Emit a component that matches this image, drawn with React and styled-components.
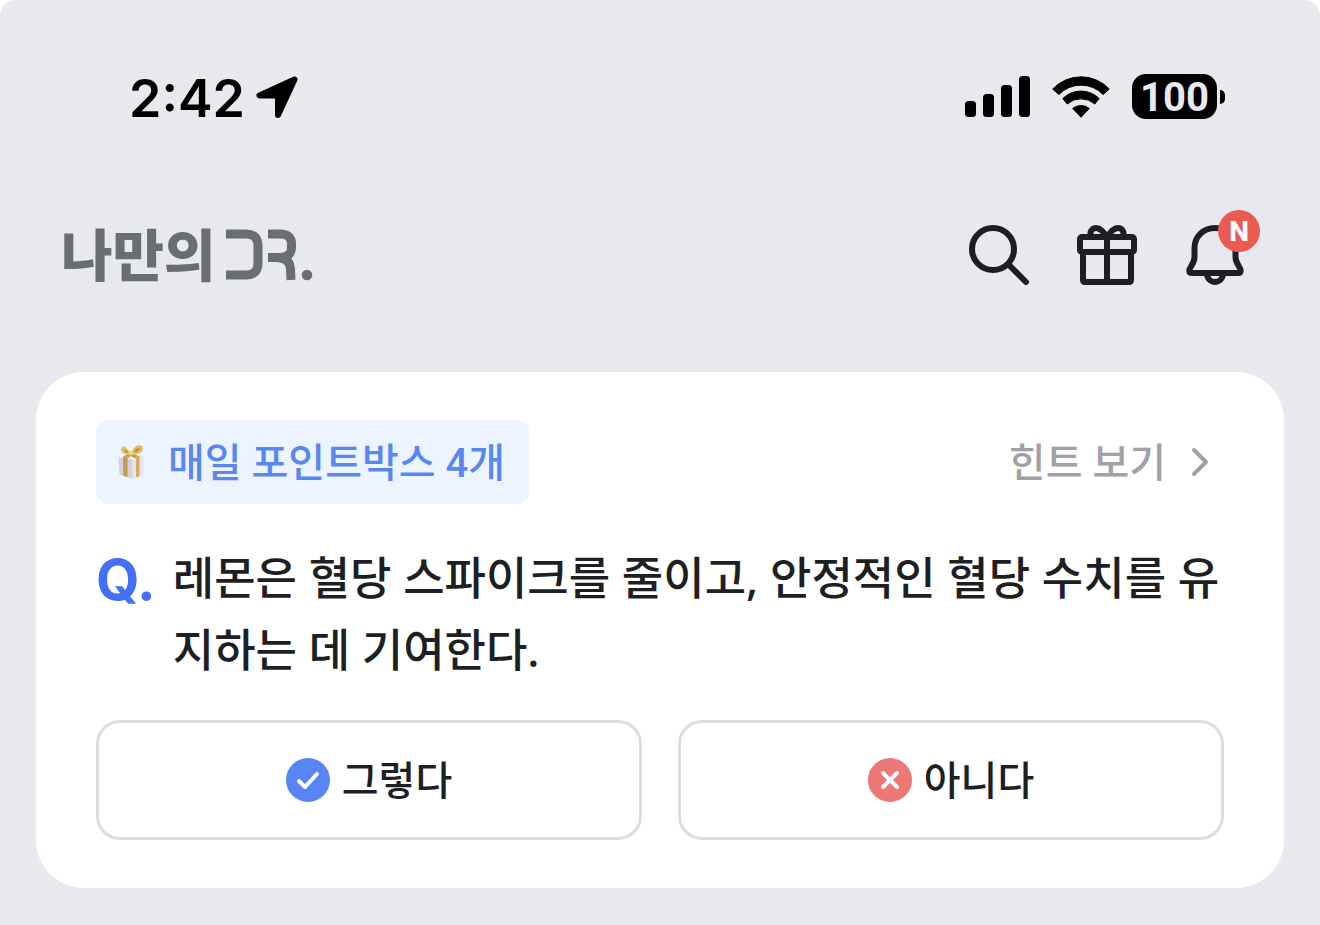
import { useState } from "react"
import styled, { createGlobalStyle } from "styled-components"

const GlobalStyle = createGlobalStyle`
  * {
    box-sizing: border-box;
  }
  body {
    margin: 0;
    background-color: white;
    font-family: Roboto, "Noto Sans CJK KR", sans-serif;
    color: #1e1f23;
  }
  button {
    font-family: inherit;
    color: inherit;
    padding: 0;
    border: none;
    background: none;
    cursor: pointer;
  }
  svg {
    display: block;
    flex-shrink: 0;
  }
`

const Page = styled.div`
  min-height: 100vh;
  background-color: #e8e9ee;
  border-radius: 16px 16px 0 0;
`

const StatusBar = styled.div`
  display: flex;
  justify-content: space-between;
  align-items: center;
  height: 128px;
  padding: 65px 95px 0 129px;
  color: black;
`

const StatusGroup = styled.div`
  display: flex;
  align-items: center;
  gap: ${({ $gap }) => $gap}px;
`

const Time = styled.time`
  padding-top: 4px;
  font-family: Inter, sans-serif;
  font-size: 52px;
  font-weight: 600;
  line-height: 60px;
`

const Battery = styled.div`
  display: flex;
  align-items: center;
  gap: 3px;
`

const BatteryBody = styled.div`
  width: 85px;
  height: 45px;
  border-radius: 14px;
  background-color: black;
  color: #e8e9ee;
  font-size: 40px;
  font-weight: 700;
  line-height: 47px;
  text-align: center;
`

const BatteryCap = styled.div`
  width: 5px;
  height: 14px;
  border-radius: 0 5px 5px 0;
  background-color: black;
`

const Header = styled.header`
  display: flex;
  justify-content: space-between;
  align-items: center;
  padding: 91px 69px 81px 61px;
`

const Logo = styled.a`
  display: flex;
  align-items: center;
  gap: 10px;
  color: #6b6d74;
  text-decoration: none;
`

const LogoText = styled.span`
  padding-bottom: 6px;
  font-family: "Noto Sans CJK KR", sans-serif;
  font-size: 56px;
  font-weight: 900;
  line-height: 66px;
`

const Actions = styled.nav`
  display: flex;
  gap: 36px;
`

const IconButton = styled.button`
  position: relative;
  width: 72px;
  height: 72px;
`

const Badge = styled.span`
  position: absolute;
  top: -9px;
  right: -9px;
  width: 42px;
  height: 42px;
  border-radius: 50%;
  background-color: #ec5b53;
  color: white;
  font-size: 28px;
  font-weight: 800;
  line-height: 44px;
  text-align: center;
`

const Card = styled.main`
  margin: 0 36px;
  padding: 48px 60px;
  border-radius: 48px;
  background-color: white;
`

const CardTop = styled.div`
  display: flex;
  justify-content: space-between;
  align-items: center;
`

const Label = styled.span`
  padding-top: 4px;
  font-size: 40px;
  font-weight: 500;
  line-height: 56px;
`

const PointChip = styled.div`
  display: flex;
  align-items: center;
  gap: 22px;
  height: 84px;
  padding: 0 24px 0 20px;
  border-radius: 12px;
  background-color: #ebf4ff;
  color: #5a86ef;
`

const HintButton = styled.button`
  display: flex;
  align-items: center;
  gap: 24px;
  padding-right: 14px;
  color: #a1a2a8;
`

const Question = styled.div`
  display: flex;
  gap: 17px;
  margin: 38px 0 34px;
  font-family: "Noto Sans", "Noto Sans CJK KR", sans-serif;
  font-size: 45px;
  font-weight: 500;
  line-height: 72px;
`

const QuestionMark = styled.span`
  color: #426ff5;
  font-family: Inter, sans-serif;
  font-size: 56px;
  font-weight: 700;
  line-height: 76px;
`

const QuestionText = styled.p`
  flex: 1;
  margin: 0;
  word-break: break-all;
`

const Answers = styled.div`
  display: grid;
  grid-template-columns: 1fr 1fr;
  gap: 36px;
`

const AnswerButton = styled.button`
  display: flex;
  justify-content: center;
  align-items: center;
  gap: 12px;
  height: 120px;
  border: 3px solid ${({ $selected }) => ($selected ? "#5a86ef" : "#dcdde0")};
  border-radius: 24px;
`

const LocationIcon = () => (
  <svg width="42" height="42" viewBox="0 0 42 42">
    <path
      d="M38.500 3.500L3.500 19.500H22V39Z"
      fill="black"
      stroke="black"
      strokeWidth="6"
      strokeLinejoin="round"
    />
  </svg>
)

const SignalIcon = () => (
  <svg width="65" height="41" viewBox="0 0 65 41">
    <rect y="25" width="11" height="16" rx="3.500" />
    <rect x="18" y="18" width="11" height="23" rx="3.500" />
    <rect x="36" y="9" width="11" height="32" rx="3.500" />
    <rect x="54" width="11" height="41" rx="3.500" />
  </svg>
)

const WifiIcon = () => (
  <svg width="58" height="42" viewBox="0 0 58 42">
    <g stroke="black" strokeLinejoin="round">
      <path d="M.7 13A39 39 0 0 1 57.300 13L51.200 18.500A31 31 0 0 0 6.800 18.500Z" />
      <path d="M10.800 22.500A26 26 0 0 1 47.200 22.500L42.800 28A21 21 0 0 0 15.200 28Z" />
      <path d="M20.700 32.500A13 13 0 0 1 37.300 32.500L29 41.300Z" />
    </g>
  </svg>
)

const LogoMark = () => (
  <svg width="87" height="52" viewBox="0 0 87 52" fill="none">
    <g stroke="currentColor" strokeWidth="9">
      <path d="M0 5H20Q32 5 32 17V34Q32 46 20 46H0" />
      <path d="M42 5H54Q65.500 5 65.500 15V18Q65.500 28.500 54 28.500H42" />
      <path d="M50 28.500Q64 28.500 64.500 40L65 51" />
    </g>
    <circle cx="81" cy="46" r="5.300" fill="currentColor" />
  </svg>
)

const LineIcon = ({ children }) => (
  <svg
    width="72"
    height="72"
    viewBox="0 0 72 72"
    fill="none"
    stroke="#1e1f23"
    strokeWidth="6"
    strokeLinecap="round"
    strokeLinejoin="round"
  >
    {children}
  </svg>
)

const SearchIcon = () => (
  <LineIcon>
    <circle cx="30" cy="30" r="21" />
    <path d="M45.500 45.500L63 63" />
  </LineIcon>
)

const GiftIcon = () => (
  <LineIcon>
    <rect x="9" y="18" width="54" height="15" rx="2" />
    <path d="M12 33V61Q12 63 14 63H58Q60 63 60 61V33" />
    <path d="M36 18V63" />
    <path d="M20 17C18 12 22 9 25 9C30 9 33 14 36 18C39 14 42 9 47 9C50 9 54 12 52 17" />
  </LineIcon>
)

const BellIcon = () => (
  <LineIcon>
    <path d="M36 9C24 9 15.500 18 15.500 29V38C15.500 45 10.300 48 10.300 51.500Q10.300 54 13 54H59Q61.700 54 61.700 51.500C61.700 48 56.500 45 56.500 38V29C56.500 18 48 9 36 9Z" />
    <path d="M28 54C28 60 32 63 36 63C40 63 44 60 44 54" />
  </LineIcon>
)

const PointGift = () => (
  <svg width="30" height="36" viewBox="0 0 30 36">
    <path d="M2.500 13L16 15V34.500L3.500 30.500Z" fill="#d3d1df" />
    <path d="M16 15L28 12L27.500 31L16 34.500Z" fill="#e4e3ef" />
    <path d="M2.500 13L14 9L28 12L16 15.500Z" fill="#f3f2f8" />
    <path d="M7 13L11.500 14V33.200L7.300 31.800Z" fill="#c39d4b" />
    <path d="M20 14L23.500 13.200V32.200L20 33.300Z" fill="#d3ad5c" />
    <path d="M7 13L15 8L23.500 13L20 14.500L15 12L11.500 14.500Z" fill="#b98f3c" />
    <path d="M14 9C11 3 7 1 6 3C3 8 8 12 14 9Z" fill="#e3bf64" />
    <path d="M16 9C17 2 23 0 26 2C29 7 23 12 16 9Z" fill="#e0ba5c" />
    <path d="M8 5Q11 6 13 9L9 8.500ZM18 8Q20 4 24 4L21 8Z" fill="#b98f3c" />
    <path d="M14 10L8 14L12 14ZM17 10L25 13L21 15Z" fill="#d8b154" />
    <circle cx="15" cy="9" r="2.500" fill="#f0d684" />
  </svg>
)

const ChevronIcon = () => (
  <svg width="20" height="30" viewBox="0 0 20 30" fill="none">
    <path
      d="M4 3L16 15L4 27"
      stroke="currentColor"
      strokeWidth="4"
      strokeLinecap="round"
      strokeLinejoin="round"
    />
  </svg>
)

const RoundIcon = ({ color, d }) => (
  <svg width="44" height="44" viewBox="0 0 44 44" fill="none">
    <circle cx="22" cy="22" r="22" fill={color} />
    <path
      d={d}
      stroke="white"
      strokeWidth="4"
      strokeLinecap="round"
      strokeLinejoin="round"
    />
  </svg>
)

const answers = [
  { label: "그렇다", color: "#5784f6", d: "M13 23L19 29L31 16" },
  { label: "아니다", color: "#ed7775", d: "M15 15L29 29M29 15L15 29" },
]

const App = () => {
  const [selected, setSelected] = useState(null)

  return (
    <Page>
      <GlobalStyle />
      <StatusBar>
        <StatusGroup $gap={11}>
          <Time>2:42</Time>
          <LocationIcon />
        </StatusGroup>
        <StatusGroup $gap={22}>
          <SignalIcon />
          <WifiIcon />
          <Battery>
            <BatteryBody>100</BatteryBody>
            <BatteryCap />
          </Battery>
        </StatusGroup>
      </StatusBar>

      <Header>
        <Logo href="#">
          <LogoText>나만의</LogoText>
          <LogoMark />
        </Logo>
        <Actions>
          <IconButton aria-label="검색">
            <SearchIcon />
          </IconButton>
          <IconButton aria-label="선물">
            <GiftIcon />
          </IconButton>
          <IconButton aria-label="알림">
            <BellIcon />
            <Badge>N</Badge>
          </IconButton>
        </Actions>
      </Header>

      <Card>
        <CardTop>
          <PointChip>
            <PointGift />
            <Label>매일 포인트박스 4개</Label>
          </PointChip>
          <HintButton>
            <Label>힌트 보기</Label>
            <ChevronIcon />
          </HintButton>
        </CardTop>

        <Question>
          <QuestionMark>Q.</QuestionMark>
          <QuestionText>
            레몬은 혈당 스파이크를 줄이고, 안정적인 혈당 수치를 유지하는 데
            기여한다.
          </QuestionText>
        </Question>

        <Answers>
          {answers.map(({ label, color, d }) => (
            <AnswerButton
              key={label}
              $selected={selected === label}
              onClick={() => setSelected(label)}
            >
              <RoundIcon color={color} d={d} />
              <Label>{label}</Label>
            </AnswerButton>
          ))}
        </Answers>
      </Card>
    </Page>
  )
}

export default App
